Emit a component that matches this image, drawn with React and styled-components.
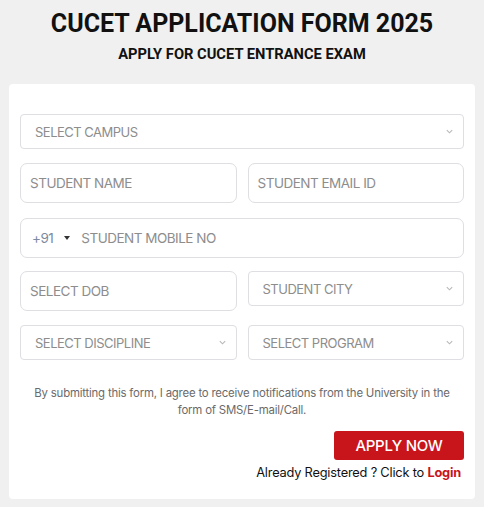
import React from 'react';
import styled, { createGlobalStyle } from 'styled-components';

const GlobalStyle = createGlobalStyle`
  * { box-sizing: border-box; }
  body {
    margin: 0;
    background: #f0f0f0;
    font-family: 'Inter', 'Liberation Sans', sans-serif;
  }
`;

const Page = styled.div`
  padding: 8px 9px 9px;
`;

const Title = styled.h1`
  margin: 0;
  text-align: center;
  font-family: 'Roboto', sans-serif;
  font-weight: 700;
  font-size: 25px;
  line-height: 32px;
  color: #111;
`;

const Subtitle = styled.h2`
  margin: 4px 0 0;
  text-align: center;
  font-family: 'Roboto', sans-serif;
  font-weight: 700;
  font-size: 14.7px;
  line-height: 20px;
  color: #111;
`;

const Card = styled.form`
  margin-top: 20px;
  background: #fff;
  border-radius: 4px;
  padding: 30px 11px 18px;
  display: flex;
  flex-direction: column;
`;

const Row = styled.div`
  display: grid;
  grid-template-columns: ${(p) => (p.cols === 2 ? '1fr 1fr' : '1fr')};
  column-gap: 11px;
  align-items: start;
  margin-bottom: ${(p) => (p.mb === undefined ? 14 : p.mb)}px;
`;

const SelectBox = styled.div`
  height: 35px;
  border: 1px solid #dedee3;
  border-radius: 4px;
  padding: 0 9px 0 14px;
  display: flex;
  align-items: center;
  justify-content: space-between;
  font-size: 13px;
  color: #8d8d8d;
  letter-spacing: -0.5px;
`;

const Chevron = styled.svg`
  width: 9px;
  height: 9px;
  color: #b8b8b8;
`;

const InputBox = styled.div`
  height: 40px;
  border: 1px solid #dedee3;
  border-radius: 7px;
  padding: 0 9px;
  display: flex;
  align-items: center;
  font-size: 13.5px;
  color: #8d8d8d;
  letter-spacing: -0.5px;
`;

const Code = styled.span`
  color: #7d8aa0;
  margin: 0 11px 0 2px;
`;

const Caret = styled.span`
  width: 0;
  height: 0;
  border-left: 3px solid transparent;
  border-right: 3px solid transparent;
  border-top: 4px solid #333;
  margin-right: 11px;
`;

const Note = styled.p`
  margin: 25px 10px 0;
  text-align: center;
  font-size: 11.4px;
  line-height: 17px;
  color: #6a6a6a;
  letter-spacing: -0.2px;
`;

const Actions = styled.div`
  margin-top: 12px;
  display: flex;
  flex-direction: column;
  align-items: flex-end;
`;

const ApplyButton = styled.button`
  width: 130px;
  height: 29px;
  border: none;
  border-radius: 3px;
  background: #c8141b;
  color: #fff;
  font-family: 'Inter', sans-serif;
  font-size: 15px;
  font-weight: 500;
  letter-spacing: -0.3px;
  cursor: pointer;
`;

const LoginLine = styled.div`
  margin-top: 5px;
  margin-right: 3px;
  font-size: 12.8px;
  line-height: 16px;
  color: #111;
  letter-spacing: -0.2px;
  a {
    color: #c8141b;
    font-weight: 700;
    text-decoration: none;
  }
`;

const Select = ({ label }) => (
  <SelectBox>
    <span>{label}</span>
    <Chevron viewBox="0 0 10 10" fill="none" stroke="currentColor" strokeWidth="1.2">
      <path d="M2 3.5l3 3 3-3" />
    </Chevron>
  </SelectBox>
);

export default function App() {
  return (
    <>
      <GlobalStyle />
      <Page>
        <Title>CUCET APPLICATION FORM 2025</Title>
        <Subtitle>APPLY FOR CUCET ENTRANCE EXAM</Subtitle>
        <Card onSubmit={(e) => e.preventDefault()}>
          <Row>
            <Select label="SELECT CAMPUS" />
          </Row>
          <Row cols={2} mb={15}>
            <InputBox>STUDENT NAME</InputBox>
            <InputBox>STUDENT EMAIL ID</InputBox>
          </Row>
          <Row mb={13}>
            <InputBox>
              <Code>+91</Code>
              <Caret />
              STUDENT MOBILE NO
            </InputBox>
          </Row>
          <Row cols={2}>
            <InputBox>SELECT DOB</InputBox>
            <Select label="STUDENT CITY" />
          </Row>
          <Row cols={2} mb={0}>
            <Select label="SELECT DISCIPLINE" />
            <Select label="SELECT PROGRAM" />
          </Row>
          <Note>
            By submitting this form, I agree to receive notifications from the University in the
            form of SMS/E-mail/Call.
          </Note>
          <Actions>
            <ApplyButton type="submit">APPLY NOW</ApplyButton>
            <LoginLine>
              Already Registered ? Click to <a href="#login">Login</a>
            </LoginLine>
          </Actions>
        </Card>
      </Page>
    </>
  );
}
